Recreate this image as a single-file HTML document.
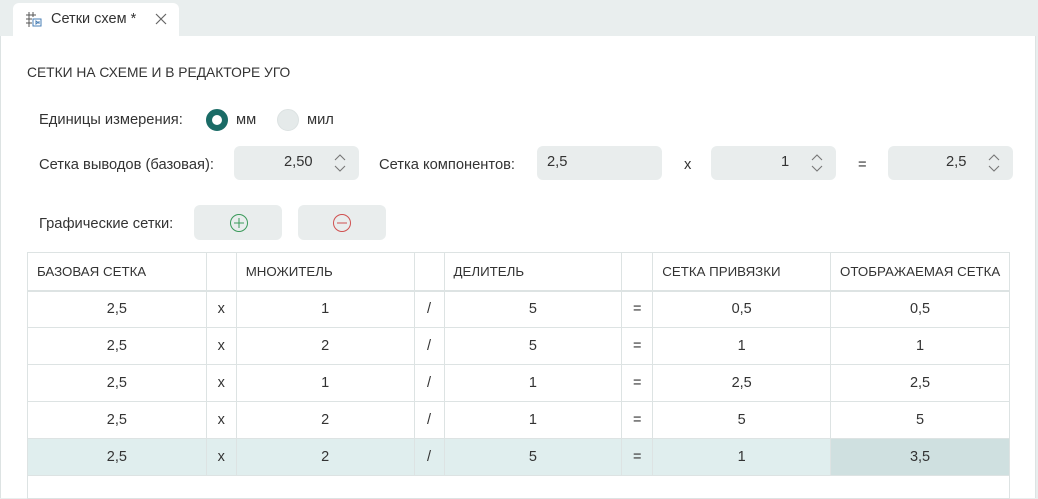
<!DOCTYPE html><html><head><meta charset="utf-8"><style>
*{box-sizing:border-box;margin:0;padding:0}
body{width:1038px;height:498px;overflow:hidden;background:#e9eeee;font-family:"Liberation Sans",sans-serif;font-size:14.7px;color:#333;position:relative}
.abs{position:absolute}
.panel{left:0;top:36px;width:1036px;height:462px;background:#fff;border-left:1px solid #dde3e3;border-right:1px solid #dde3e3}
.tab{left:13px;top:3px;width:166px;height:34px;background:#fff;border-radius:6px 6px 0 0}
.box{background:#e9eded;border-radius:6px;height:34px}
.num{position:absolute;top:8px;font-size:14.7px}
table{position:absolute;left:27px;top:252px;border-collapse:collapse;width:983px;font-size:14.5px}
td{border:1px solid #dde3e3;height:37px;text-align:center}
tr.h td{height:38px;text-align:left;padding-left:9px;font-size:13.3px;border-bottom:2px solid #dde3e3}
tr.h td.e{padding:0}
tr.sel td{background:#e0eeee}
tr.sel td.last{background:#cfe0e0}
</style></head><body>
<div class="abs panel"></div>
<div class="abs tab"></div>
<svg class="abs" style="left:25px;top:11px" width="18" height="17" viewBox="0 0 18 17"><g stroke="#555" stroke-width="1" fill="none"><path d="M4 1v15M8 1v5M1 4h10M1 8h6M1 12h6"/><rect x="8" y="8" width="8" height="7" stroke="#4a7fb5"/><path d="M11 10v3l2-1.5z M14 10v3" stroke="#4a7fb5"/></g></svg>
<div class="abs" style="left:51px;top:11px;font-size:14.5px">Сетки схем *</div>
<svg class="abs" style="left:155px;top:13px" width="12" height="12"><path d="M1 1l10 10M11 1L1 11" stroke="#666" stroke-width="1.2"/></svg>
<div class="abs" style="left:27px;top:65px;font-size:13.8px">СЕТКИ НА СХЕМЕ И В РЕДАКТОРЕ УГО</div>
<div class="abs" style="left:39px;top:112px">Единицы измерения:</div>
<div class="abs" style="left:206px;top:109px;width:22px;height:22px;border-radius:50%;border:6px solid #1a6b66;background:#fff"></div>
<div class="abs" style="left:236px;top:112px">мм</div>
<div class="abs" style="left:277px;top:109px;width:22px;height:22px;border-radius:50%;background:#e5eaea;border:1px solid #dce2e2"></div>
<div class="abs" style="left:307px;top:112px">мил</div>
<div class="abs" style="left:39px;top:157px">Сетка выводов (базовая):</div>
<div class="abs box" style="left:234px;top:146px;width:125px"><span class="num" style="left:50px">2,50</span></div>
<svg class="abs" style="left:333px;top:154px" width="14" height="18"><path d="M2 6l5-5 5 5M2 12l5 5 5-5" stroke="#777" fill="none" stroke-width="1.1"/></svg>
<div class="abs" style="left:379px;top:157px">Сетка компонентов:</div>
<div class="abs box" style="left:537px;top:146px;width:125px"><span class="num" style="left:10px">2,5</span></div>
<div class="abs" style="left:684px;top:157px">x</div>
<div class="abs box" style="left:711px;top:146px;width:125px"><span class="num" style="left:70px">1</span></div>
<svg class="abs" style="left:810px;top:154px" width="14" height="18"><path d="M2 6l5-5 5 5M2 12l5 5 5-5" stroke="#777" fill="none" stroke-width="1.1"/></svg>
<div class="abs" style="left:858px;top:157px">=</div>
<div class="abs box" style="left:888px;top:146px;width:125px"><span class="num" style="left:58px">2,5</span></div>
<svg class="abs" style="left:987px;top:154px" width="14" height="18"><path d="M2 6l5-5 5 5M2 12l5 5 5-5" stroke="#777" fill="none" stroke-width="1.1"/></svg>
<div class="abs" style="left:39px;top:216px">Графические сетки:</div>
<div class="abs box" style="left:194px;top:205px;width:88px;height:35px"></div>
<svg class="abs" style="left:229px;top:213px" width="20" height="20"><circle cx="10" cy="10" r="8.5" stroke="#3a9a5a" fill="none"/><path d="M10 5v10M5 10h10" stroke="#3a9a5a"/></svg>
<div class="abs box" style="left:298px;top:205px;width:88px;height:35px"></div>
<svg class="abs" style="left:332px;top:213px" width="20" height="20"><circle cx="10" cy="10" r="8.5" stroke="#d05050" fill="none"/><path d="M5 10h10" stroke="#d05050"/></svg>
<table>
<colgroup><col style="width:179px"><col style="width:30px"><col style="width:178px"><col style="width:30px"><col style="width:178px"><col style="width:31px"><col style="width:178px"><col style="width:179px"></colgroup>
<tr class="h"><td>БАЗОВАЯ СЕТКА</td><td class="e"></td><td>МНОЖИТЕЛЬ</td><td class="e"></td><td>ДЕЛИТЕЛЬ</td><td class="e"></td><td>СЕТКА ПРИВЯЗКИ</td><td>ОТОБРАЖАЕМАЯ СЕТКА</td></tr>
<tr><td>2,5</td><td>x</td><td>1</td><td>/</td><td>5</td><td>=</td><td>0,5</td><td>0,5</td></tr>
<tr><td>2,5</td><td>x</td><td>2</td><td>/</td><td>5</td><td>=</td><td>1</td><td>1</td></tr>
<tr><td>2,5</td><td>x</td><td>1</td><td>/</td><td>1</td><td>=</td><td>2,5</td><td>2,5</td></tr>
<tr><td>2,5</td><td>x</td><td>2</td><td>/</td><td>1</td><td>=</td><td>5</td><td>5</td></tr>
<tr class="sel"><td>2,5</td><td>x</td><td>2</td><td>/</td><td>5</td><td>=</td><td>1</td><td class="last">3,5</td></tr>
<tr><td colspan="8" style="height:23px"></td></tr>
</table>
</body></html>
